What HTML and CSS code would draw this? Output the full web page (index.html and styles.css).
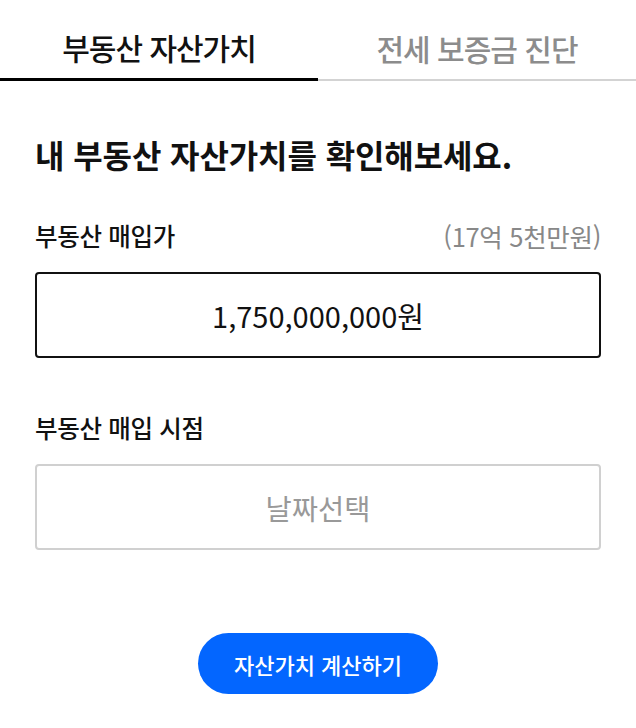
FILE: index.html
```html
<!DOCTYPE html>
<html lang="ko">
<head>
	<meta charset="utf-8">
	<title>부동산 자산가치</title>
	<link rel="stylesheet" href="styles.css">
</head>
<body>
	<nav class="tabs">
		<a class="tab active">부동산 자산가치</a>
		<a class="tab">전세 보증금 진단</a>
	</nav>

	<main class="content">
		<h1 class="title">내 부동산 자산가치를 확인해보세요.</h1>

		<div class="field">
			<div class="field-head">
				<label class="label">부동산 매입가</label>
				<span class="hint">(17억 5천만원)</span>
			</div>
			<div class="box filled">1,750,000,000원</div>
		</div>

		<div class="field second">
			<div class="field-head">
				<label class="label">부동산 매입 시점</label>
			</div>
			<div class="box empty">날짜선택</div>
		</div>

		<div class="actions">
			<button class="submit">자산가치 계산하기</button>
		</div>
	</main>
</body>
</html>
```

FILE: styles.css
```css
body {
	margin: 0;
	background: #fff;
	color: #111;
	font-family: "Noto Sans CJK KR", "Noto Sans", sans-serif;
}

.tabs {
	display: flex;
	height: 81px;
}

.tab {
	flex: 1;
	display: flex;
	align-items: center;
	justify-content: center;
	font-size: 30px;
	font-weight: 500;
	letter-spacing: -1px;
	color: #8c8c8c;
	border-bottom: 2px solid #d3d3d3;
	box-sizing: border-box;
	padding-top: 16px;
}

.tab.active {
	color: #111;
	border-bottom: 3px solid #000;
	padding-top: 15px;
}

.content {
	padding: 0 35px;
}

.title {
	margin: 52px 0 0;
	font-size: 32px;
	font-weight: 700;
	line-height: 42px;
	letter-spacing: -0.1px;
}

.field {
	margin-top: 43px;
}

.field.second {
	margin-top: 52px;
}

.field-head {
	display: flex;
	justify-content: space-between;
	align-items: center;
	height: 34px;
}

.label {
	font-size: 24.5px;
	font-weight: 500;
	letter-spacing: -0.3px;
}

.hint {
	font-size: 25.5px;
	color: #888;
	letter-spacing: -0.3px;
}

.box {
	margin-top: 20px;
	height: 86px;
	box-sizing: border-box;
	border-radius: 4px;
	display: flex;
	align-items: center;
	justify-content: center;
}

.box.filled {
	border: 2px solid #111;
	font-size: 29px;
}

.box.empty {
	border: 2px solid #d0d0d0;
	color: #999;
	font-size: 28.5px;
}

.actions {
	display: flex;
	justify-content: center;
	margin-top: 83px;
}

.submit {
	width: 240px;
	height: 61px;
	border: none;
	border-radius: 31px;
	background: #0366ff;
	color: #fff;
	font-family: inherit;
	font-size: 22px;
	font-weight: 500;
}
```
